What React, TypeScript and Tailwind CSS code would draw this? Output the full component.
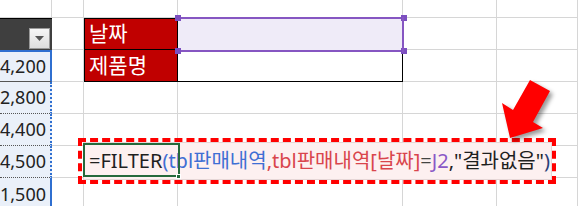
const cols = ["w-[52px]", "w-[32px]", "w-[94px]", "w-[225px]", "w-[94px]", "w-[81px]"];
const numbers = ["4,200", "2,800", "4,400", "4,500", "1,500"];

function Cell({ className = "", children }: { className?: string; children?: React.ReactNode }) {
  return <div className={`shrink-0 border-r border-b border-[#d6d6d6] ${className}`}>{children}</div>;
}

function Row({ height, first }: { height: string; first: React.ReactNode }) {
  return (
    <div className={`flex ${height}`}>
      {first}
      {cols.slice(1).map((w) => (
        <Cell key={w} className={w} />
      ))}
    </div>
  );
}

export default function App() {
  return (
    <div className="relative h-[206px] w-[578px] overflow-hidden bg-white font-['Noto_Sans','Noto_Sans_CJK_KR',sans-serif]">
      <div className="flex flex-col">
        <Row height="h-[18px]" first={<Cell className="w-[52px]" />} />

        {/* header row + label cells */}
        <div className="flex h-[32px]">
          <div className="flex w-[52px] shrink-0 items-end justify-end border-t border-black bg-[#3f3f3f] pr-[2px] pb-[1px]">
            <div className="flex h-[21px] w-[21px] items-center justify-center border border-[#9a9a9a] bg-gradient-to-b from-[#f6f6f6] to-[#dedede]">
              <svg width="9" height="5" viewBox="0 0 9 5">
                <path d="M0 0h9L4.5 5z" fill="#555" />
              </svg>
            </div>
          </div>
          <Cell className="w-[32px]" />
          <div className="flex w-[94px] shrink-0 items-center border border-black bg-[#c00000] pl-[4px] text-[21px] text-white">
            날짜
          </div>
          <div className="w-[225px] shrink-0 bg-[#efebf8]" />
          <Cell className="w-[94px]" />
          <Cell className="w-[81px]" />
        </div>

        <div className="flex h-[32px]">
          <div className="flex w-[52px] shrink-0 items-center justify-end overflow-hidden border-t-2 border-r-2 border-b border-t-[#2f6fd0] border-r-[#2f6fd0] border-b-[#555] border-b-dotted bg-[#eaf0f9] pr-[4px] text-[18px] whitespace-nowrap text-[#222]">
            {numbers[0]}
          </div>
          <Cell className="w-[32px]" />
          <div className="flex w-[94px] shrink-0 items-center border-x border-b border-black bg-[#c00000] pl-[4px] text-[21px] text-white">
            제품명
          </div>
          <div className="w-[225px] shrink-0 border-r border-b border-black" />
          <Cell className="w-[94px]" />
          <Cell className="w-[81px]" />
        </div>

        {numbers.slice(1).map((n, i) => (
          <Row
            key={n}
            height={i === 3 ? "h-[40px]" : "h-[32px]"}
            first={
              <div
                className={`flex w-[52px] shrink-0 items-center justify-end overflow-hidden border-r-2 border-r-[#2f6fd0] bg-[#eaf0f9] pr-[4px] text-[18px] whitespace-nowrap text-[#222] ${i === 3 ? "items-start pt-[3px]" : "border-b border-b-[#555] border-dotted border-l-0 border-t-0"}`}
              >
                {n}
              </div>
            }
          />
        ))}
      </div>

      {/* selected cell */}
      <div className="absolute top-[17px] left-[178px] h-[35px] w-[226px] border-y-2 border-[#8656c2]" />
      <div className="absolute top-[15px] left-[175px] h-[6px] w-[6px] bg-[#7c4fc0]" />
      <div className="absolute top-[48px] left-[175px] h-[6px] w-[6px] bg-[#7c4fc0]" />
      <div className="absolute top-[15px] left-[401px] h-[6px] w-[6px] bg-[#7c4fc0]" />
      <div className="absolute top-[48px] left-[401px] h-[6px] w-[6px] bg-[#7c4fc0]" />
      <div className="absolute top-[17px] left-[402px] h-[35px] w-[2px] bg-[#8656c2]" />

      {/* in-cell editor */}
      <div className="absolute top-[142px] left-[83px] flex h-[38px] w-[469px] items-center border border-[#e6d6d6] bg-[#fdf0f0] pl-[5px] text-[20px] whitespace-nowrap">
        <span className="text-[#1f1f1f]">=FILTER</span>
        <span className="text-[#3f6fd4]">(tbl판매내역</span>
        <span className="text-[#d9454c]">,tbl판매내역[날짜]</span>
        <span className="text-[#444]">=</span>
        <span className="text-[#8a58c6]">J2</span>
        <span className="text-[#1f1f1f]">,"결과없음"</span>
        <span className="text-[#2a3f78]">)</span>
        <span className="ml-[2px] h-[34px] w-[2px] bg-[#555]" />
      </div>
      <div className="absolute top-[143px] left-[83px] h-[34px] w-[97px] border-2 border-[#25693b]" />
      <div className="absolute top-[174px] left-[176px] h-[5px] w-[5px] border border-white bg-[#25693b]" />

      {/* dashed highlight */}
      <div className="absolute top-[138px] left-[78px] h-[46px] w-[478px] border-4 border-dashed border-[#ff0000]" />

      {/* arrow */}
      <svg
        className="absolute top-[75px] left-[495px] drop-shadow-[3px_3px_2px_rgba(0,0,0,0.4)]"
        width="70"
        height="72"
        viewBox="0 0 70 72"
      >
        <polygon points="35,5 55,16 38,47 48,53 15,63 7,28 18,35" fill="#ff0000" />
      </svg>
    </div>
  );
}
